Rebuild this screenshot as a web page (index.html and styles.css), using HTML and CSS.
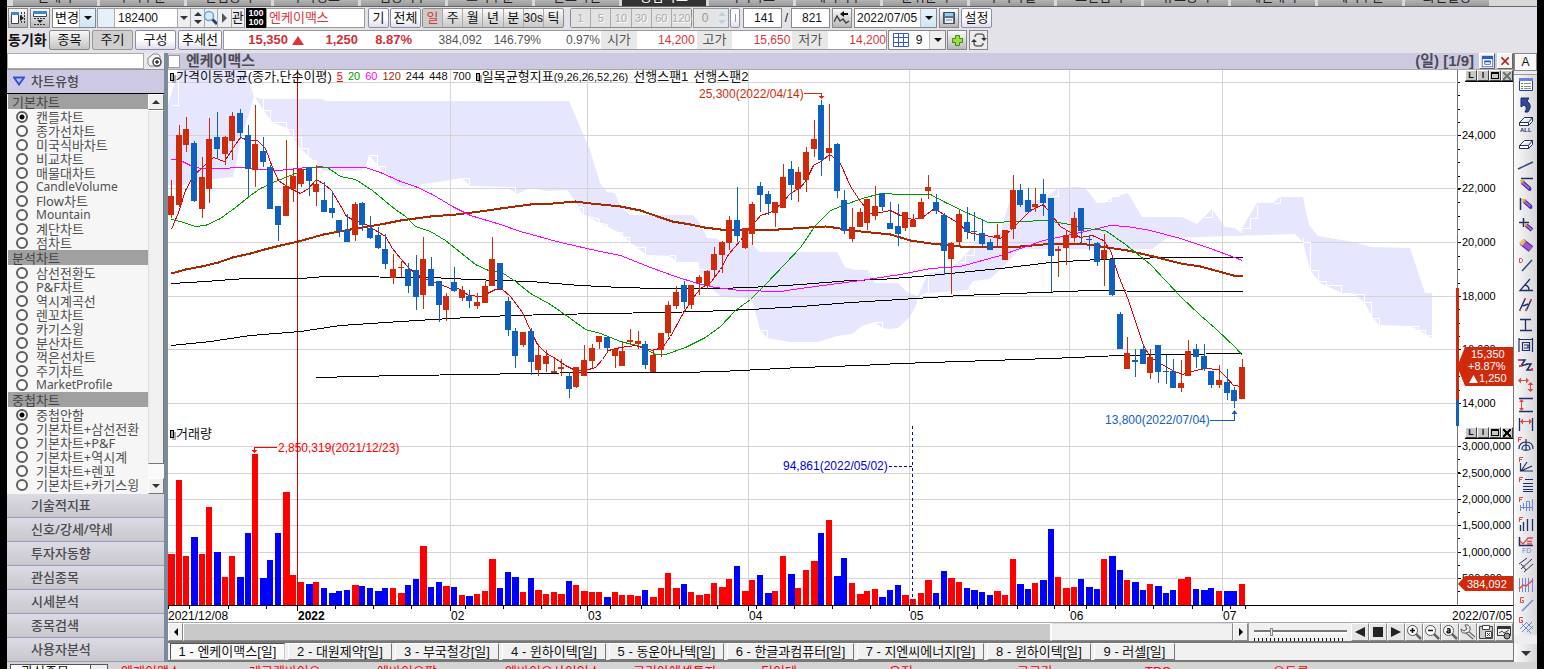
FILE: index.html
```html
<!DOCTYPE html>
<html lang="ko">
<head>
<meta charset="utf-8">
<title>엔케이맥스 차트</title>
<link rel="stylesheet" href="styles.css">
</head>
<body>
<div class="shell">
  <nav class="screens">
    <a href="#">현재가</a><a href="#">주식주문</a><a href="#">관심종목</a><a href="#">투자정보</a><a href="#">업종지수</a><a href="#">호가주문</a><a href="#">잔고확인</a><a href="#" class="on">종합차트</a><a href="#">미니차트</a><a href="#">해외지수</a><a href="#">순위분석</a><a href="#">투자자별</a><a href="#">조건검색</a><a href="#">뉴스공시</a><a href="#">체결내역</a><a href="#">예약주문</a><a href="#">화면설정</a>
  </nav>

  <header class="bars">
    <div class="bar">
      <button class="ico" aria-label="왼쪽 창"><svg viewBox="0 0 16 16"><path d="M1.500 2.500h7v11h-7z" fill="#fff" stroke="#345"/><path d="M1 2h8v3H1z" fill="#3a8ac8"/><path d="M11.500 2v12M14.500 2v12" stroke="#333" stroke-dasharray="2 1"/><path d="M10 5l4 3-4 3z" fill="#222"/></svg></button>
      <button class="ico" aria-label="위쪽 창"><svg viewBox="0 0 16 16"><path d="M1.500 1.500h13v5h-13z" fill="#fff" stroke="#345"/><path d="M1 1h14v3H1z" fill="#3a8ac8"/><path d="M2 8.500h12M2 14.500h12" stroke="#333" stroke-dasharray="2 1"/><path d="M5 10h6l-3 3z" fill="#222"/></svg></button>
      <button class="drop w-change"><span>변경</span><i class="dn blue"></i></button>
      <div class="code">
        <span class="flag"></span><input class="code-in" aria-label="종목코드" value="182400"><button class="cell" aria-label="목록"><i class="tri-d"></i></button><span class="cell spin"><i class="tri-u"></i><i class="tri-d"></i></span><button class="cell" aria-label="검색"><svg viewBox="0 0 16 16"><path d="M9 9l5 5" stroke="#246" stroke-width="3"/><circle cx="6" cy="6" r="4.500" fill="#d4ecfa" stroke="#6ea6c8" stroke-width="1.500"/></svg></button><button class="cell" aria-label="다음"><i class="tri-r"></i></button><button class="cell">관</button>
      </div>
      <span class="margin"><b>100</b><b>100</b></span>
      <input class="name-in" aria-label="종목명" value="엔케이맥스">
      <button class="btn w-s">기</button><button class="btn w-m">전체</button>
      <div class="seg"><button class="down red">일</button><button>주</button><button>월</button><button>년</button><button>분</button><button class="num-b">30s</button><button>틱</button></div>
      <div class="seg off"><button class="down">1</button><button>5</button><button>10</button><button>30</button><button>60</button><button>120</button></div>
      <span class="zero"><em>0</em><span class="spin pale"><i class="tri-u"></i><i class="tri-d"></i></span></span>
      <button class="grip" aria-label="간격"><i></i></button>
      <input class="num" aria-label="표시 개수" value="141"><span class="slash">/</span><input class="num" aria-label="전체 개수" value="821">
      <button class="ico" aria-label="되돌리기"><svg viewBox="0 0 16 16"><path d="M0 12l3-6 3 5 3-2 3 4 3-2" fill="none" stroke="#444" stroke-width="1.500"/><path d="M8 4h6" stroke="#111" stroke-width="2"/><path d="M6 4l4-3v6z" fill="#111"/></svg></button>
      <button class="drop w-date"><span>2022/07/05</span><i class="dn blue"></i></button>
      <button class="ico" aria-label="저장"><svg viewBox="0 0 16 16"><path d="M2.500 2.500h11v11h-11z" fill="#58768a" stroke="#385060"/><path d="M4 3h8v3H4z" fill="#8fd0ee"/><path d="M4 8h8v5H4z" fill="#eee"/><path d="M5 10h6" stroke="#888"/></svg></button>
      <button class="btn w-m">설정</button>
    </div>
    <div class="bar">
      <strong class="sync">동기화</strong>
      <button class="btn grey w-l">종목</button><button class="btn down w-l">주기</button><button class="btn w-l">구성</button><button class="btn w-xl">추세선</button>
      <div class="quote">
        <b class="q1">15,350</b><i class="up"></i><b class="q2">1,250</b><b class="q3">8.87%</b><span class="q4">384,092</span><span class="q3">146.79%</span><span class="q3">0.97%</span><label>시가</label><span class="q5">14,200</span><label>고가</label><span class="q5">15,650</span><label>저가</label><span class="q5">14,200</span>
      </div>
      <button class="drop w-grid"><svg viewBox="0 0 16 16"><path d="M.5 1.500h15v13h-15zM5.500 1v14M10.500 1v14M1 5.500h14M1 10.500h14" fill="#fff" stroke="#3558c8"/></svg><span>9</span><i class="dn"></i></button>
      <button class="ico" aria-label="추가"><svg viewBox="0 0 16 16"><path d="M6.500 3.500h4v3h3v4h-3v3h-4v-3h-3v-4h3z" fill="#9adf3c" stroke="#3d8a1e"/></svg></button>
      <button class="ico flat" aria-label="새로고침"><svg viewBox="0 0 16 16"><path d="M4 5q0-3 3-3h3q3 0 3 3v1M12 11q0 3-3 3H6q-3 0-3-3v-1" fill="none" stroke="#666" stroke-width="1.500"/><path d="M10 6h6l-3 3zM0 10h6L3 7z" fill="#333"/></svg></button>
    </div>
  </header>

  <div class="work">
    <aside class="side">
      <div class="find"><input aria-label="차트 검색"><button aria-label="찾기"><svg viewBox="0 0 16 16"><path d="M1 5l3-2 2-2h5l2 2v10H3L1 11z" fill="#f4f4f4" stroke="#888"/><circle cx="10" cy="9" r="4" fill="#fff" stroke="#444" stroke-width="1.500"/><path d="M8 9h4M10 7v4" stroke="#333" stroke-width="1.500"/></svg></button></div>
      <h2 class="fold open"><svg viewBox="0 0 12 10"><path d="M1 1.500h10L6 8.500z" fill="#b4c8ff" stroke="#3454d8" stroke-width="2"/></svg>차트유형</h2>
      <div class="list">
        <form class="kinds">
          <h3>기본차트</h3>
          <label><input type="radio" name="t" checked>캔들차트</label>
          <label><input type="radio" name="t">종가선차트</label>
          <label><input type="radio" name="t">미국식바차트</label>
          <label><input type="radio" name="t">비교차트</label>
          <label><input type="radio" name="t">매물대차트</label>
          <label class="en"><input type="radio" name="t">CandleVolume</label>
          <label><input type="radio" name="t">Flow차트</label>
          <label class="en"><input type="radio" name="t">Mountain</label>
          <label><input type="radio" name="t">계단차트</label>
          <label><input type="radio" name="t">점차트</label>
          <h3>분석차트</h3>
          <label><input type="radio" name="t">삼선전환도</label>
          <label><input type="radio" name="t">P&amp;F차트</label>
          <label><input type="radio" name="t">역시계곡선</label>
          <label><input type="radio" name="t">렌꼬차트</label>
          <label><input type="radio" name="t">카기스윙</label>
          <label><input type="radio" name="t">분산차트</label>
          <label><input type="radio" name="t">꺽은선차트</label>
          <label><input type="radio" name="t">주기차트</label>
          <label class="en"><input type="radio" name="t">MarketProfile</label>
          <h3>중첩차트</h3>
          <label><input type="radio" name="o" checked>중첩안함</label>
          <label><input type="radio" name="o">기본차트+삼선전환</label>
          <label><input type="radio" name="o">기본차트+P&amp;F</label>
          <label><input type="radio" name="o">기본차트+역시계</label>
          <label><input type="radio" name="o">기본차트+렌꼬</label>
          <label><input type="radio" name="o">기본차트+카기스윙</label>
        </form>
        <div class="vscroll"><button aria-label="위로"><i class="tri-u"></i></button><span class="thumb"></span><span class="rail"></span><button aria-label="아래로"><i class="tri-d"></i></button></div>
      </div>
      <button class="fold">기술적지표</button>
      <button class="fold">신호/강세/약세</button>
      <button class="fold">투자자동향</button>
      <button class="fold">관심종목</button>
      <button class="fold">시세분석</button>
      <button class="fold">종목검색</button>
      <button class="fold">사용자분석</button>
    </aside>

    <main class="pane">
      <div class="title"><input type="checkbox" aria-label="선택"><h1>엔케이맥스</h1><span class="count">(일) [1/9]</span>
        <button aria-label="최대화"><svg viewBox="0 0 16 16"><path d="M1 1h14v14H1z" fill="#2c5cc4"/><path d="M2 5h12v9H2z" fill="#fff"/><path d="M4.500 7.500h7v4h-7z" fill="#fff" stroke="#2c5cc4"/><path d="M4 7h8v2H4z" fill="#2c5cc4"/></svg></button>
        <button aria-label="닫기"><svg viewBox="0 0 16 16"><path d="M3 3l9 9M12 3l-9 9" stroke="#a82020" stroke-width="2"/></svg></button></div>
      <div class="chart">
        <svg class="plot" id="plot"></svg>
        <svg class="axis" id="axis" viewBox="1456 70 57 553"></svg>
        <div class="legend"><i class="pin"></i><span>가격이동평균(종가,단순이평)</span><span class="n r">5</span><span class="n g">20</span><span class="n m">60</span><span class="n b">120</span><span class="n">244</span><span class="n">448</span><span class="n">700</span><i class="pin"></i><span>일목균형지표<span class="n">(9,26,26,52,26)</span></span><span>선행스팬1</span><span>선행스팬2</span></div>
        <div class="legend vol"><i class="pin"></i><span>거래량</span></div>
        <div class="mini"><button>L</button><button>I</button><button><i class="box"></i></button><button class="dim" aria-label="닫기"><i class="ex"></i></button></div>
        <div class="mini vol"><button>L</button><button>I</button><button><i class="box"></i></button><button aria-label="닫기"><i class="ex"></i></button></div>
      </div>
      <div class="navrow">
        <button class="nb" aria-label="왼쪽"><i class="tri-l"></i></button><span class="hthumb"></span><span class="hrest"></span><button class="nb" aria-label="오른쪽"><i class="tri-rs"></i></button>
        <span class="zoom"><input type="range" aria-label="확대" value="18"><span class="marks"></span></span>
        <button class="pb" aria-label="뒤로"><svg viewBox="0 0 16 16"><path d="M13 3v10L3 8z" fill="#222"/></svg></button>
        <button class="pb" aria-label="정지"><svg viewBox="0 0 16 16"><path d="M3 3h10v10H3z" fill="#222"/></svg></button>
        <button class="pb" aria-label="앞으로"><svg viewBox="0 0 16 16"><path d="M3 3v10l10-5z" fill="#222"/></svg></button>
        <button class="pb" aria-label="확대"><svg viewBox="0 0 16 16"><path d="M10 10l5 5" stroke="#666" stroke-width="2.500"/><circle cx="6.500" cy="6.500" r="5" fill="#fff" stroke="#555"/><path d="M4 6.500h5M6.500 4v5" stroke="#111" stroke-width="1.500"/></svg></button>
        <button class="pb" aria-label="축소"><svg viewBox="0 0 16 16"><path d="M10 10l5 5" stroke="#666" stroke-width="2.500"/><circle cx="6.500" cy="6.500" r="5" fill="#fff" stroke="#555"/><path d="M4 6.500h5" stroke="#111" stroke-width="1.500"/></svg></button>
        <button class="pb" aria-label="전체"><svg viewBox="0 0 16 16"><path d="M10 10l5 5" stroke="#666" stroke-width="2.500"/><circle cx="6.500" cy="6.500" r="5" fill="#fff" stroke="#555"/><path d="M5 5q3-1 3 1v3M8 7q-3-.5-3 1t3 .5" fill="none" stroke="#111" stroke-width="1.500"/></svg></button>
        <button class="pb" aria-label="도구"><svg viewBox="0 0 16 16"><path d="M7 8l7 6" stroke="#555" stroke-width="4"/><path d="M7 8l7 6" stroke="#ddd" stroke-width="2"/><path d="M5 1q4-1 5 3t-4 5-5-4l3 2 3-2z" fill="#eee" stroke="#555"/></svg></button>
        <button class="pb" aria-label="복사"><svg viewBox="0 0 16 16"><path d="M1.500 2.500h13v12h-13z" fill="#ccc" stroke="#444"/><path d="M4.500 1.500h7v4h-7z" fill="#fff" stroke="#444"/><path d="M7.500 7.500h6v6h-6z" fill="#fff" stroke="#444"/><path d="M9 9l3 3M12 9l-3 3" stroke="#333"/></svg></button>
        <button class="pb" aria-label="설정"><svg viewBox="0 0 16 16"><path d="M1.500 2.500h13v9h-13z" fill="#eee" stroke="#333"/><path d="M1 4h14" stroke="#333" stroke-width="2"/><path d="M3 9l3-2 2 2 5-3" fill="none" stroke="#444"/><circle cx="11" cy="12" r="3" fill="#999" stroke="#222"/></svg></button>
      </div>
      <nav class="tabs"><button class="t5 on">1 - 엔케이맥스[일]</button><button class="t4">2 - 대원제약[일]</button><button class="t4">3 - 부국철강[일]</button><button class="t4">4 - 윈하이텍[일]</button><button class="t5">5 - 동운아나텍[일]</button><button class="t6">6 - 한글과컴퓨터[일]</button><button class="t6">7 - 지엔씨에너지[일]</button><button class="t4">8 - 윈하이텍[일]</button><button class="t2">9 - 러셀[일]</button></nav>
    </main>

    <aside class="tools">
      <button class="a">A</button>
      <div class="strip">
        <button aria-label="목록"><svg viewBox="0 0 16 16"><path d="M1.500 1.500h13v12h-13z" fill="#fff" stroke="#2c3c98"/><path d="M1 1h14v3H1z" fill="#6e80e0"/><path d="M3 6.500h2M3 9.500h2M3 11.500h2" stroke="#2a9a3a"/><path d="M6 6.500h7M6 9.500h7M6 11.500h7" stroke="#8890a8"/></svg></button>
        <button aria-label="되돌리기"><svg viewBox="0 0 16 16"><path d="M3 1h8L9 4q6 4 1 11H7q3-5-1-7L3 10z" fill="#30489c" stroke="#1a2b6a"/></svg></button>
        <button aria-label="모두 지우기"><svg viewBox="0 0 16 16"><path d="M1.500 5.500l5-5h8l-4 5zM1.500 5.500v3h9l4-4v-4M10.500 5.500v3" fill="#fff" stroke="#1c2f6b"/><text x="2" y="15" font-size="6" font-weight="bold" fill="#1c2f6b">ALL</text></svg></button>
        <button aria-label="지우기"><svg viewBox="0 0 16 16"><path d="M1.500 8.500l5-5h8l-4 5zM1.500 8.500v3h9l4-4v-4M10.500 8.500v3" fill="#fff" stroke="#1c2f6b"/></svg></button>
        <button aria-label="추세선"><svg viewBox="0 0 16 16"><path d="M0 12l15-7" stroke="#30487c" stroke-width="1.500"/></svg></button>
        <button aria-label="수평선"><svg viewBox="0 0 16 16"><path d="M3 1.500h12" stroke="#1c2f6b" stroke-width="1.500"/><path d="M4 5l8 7" stroke="#502080" stroke-width="4"/><path d="M4 5l8 7" stroke="#a868e0" stroke-width="2"/><path d="M2 3l5 0-4 4z" fill="#e8b040"/><path d="M11 12l2 1" stroke="#3030e0" stroke-width="3"/></svg></button>
        <button aria-label="수직선"><svg viewBox="0 0 16 16"><path d="M2.500 1v12" stroke="#1c2f6b" stroke-width="1.500"/><path d="M6 4l7 6" stroke="#502080" stroke-width="4"/><path d="M6 4l7 6" stroke="#a868e0" stroke-width="2"/><path d="M4 2l5 0-4 4z" fill="#e8b040"/><path d="M12 10l2 1" stroke="#3030e0" stroke-width="3"/></svg></button>
        <button aria-label="십자선"><svg viewBox="0 0 16 16"><path d="M5.500 1v9M1 5.500h10" stroke="#1c2f6b" stroke-width="1.500"/><path d="M8 8l6 5" stroke="#502080" stroke-width="4"/><path d="M8 8l6 5" stroke="#a868e0" stroke-width="2"/><path d="M6 6l4 0-3 4z" fill="#e8b040"/></svg></button>
        <button aria-label="연필"><svg viewBox="0 0 16 16"><path d="M4 5l9 7" stroke="#502080" stroke-width="7"/><path d="M4 5l9 7" stroke="#9a58d8" stroke-width="5"/><path d="M1 6l4-4 3 2-4 5z" fill="#e8c060"/></svg></button>
        <button aria-label="D"><svg viewBox="0 0 16 16"><path d="M1.500 1.500h2l1 1v2l-1 1h-2z" fill="none" stroke="#e04848"/><path d="M4 14L14 3" stroke="#30487c" stroke-width="1.500"/></svg></button>
        <button aria-label="각도"><svg viewBox="0 0 16 16"><path d="M12 2L2 13.500h13M7 8q4 1 4 5" fill="none" stroke="#1c2f6b" stroke-width="1.300"/></svg></button>
        <button aria-label="평행"><svg viewBox="0 0 16 16"><path d="M2 13L7 2M8 14l5-11M5 9l5-2" stroke="#1c2f6b" stroke-width="1.500"/><path d="M1 12h2v2H1zM6 1h2v2H6zM7 12h2v2H7zM12 2h2v2h-2z" fill="#e04848"/></svg></button>
        <button aria-label="기간"><svg viewBox="0 0 16 16"><path d="M2 2.500h11M2 13.500h12M7.500 2v12" stroke="#1c2f6b" stroke-width="1.300"/></svg></button>
        <button aria-label="사각"><svg viewBox="0 0 16 16"><path d="M1 1v14M14.500 1v14M1 2.500h13M4.500 5.500h7v8h-7zM6 8h4v3H6" fill="none" stroke="#1c2f6b" stroke-width="1.200"/></svg></button>
        <button aria-label="파동"><svg viewBox="0 0 16 16"><path d="M2 3h5l-4 6 7-2M8 7h5l-4 6h6" fill="none" stroke="#1c2f6b" stroke-width="1.500"/><path d="M0 2h3v2H0zM1 8h3v2H1zM13 11h2v3h-2z" fill="#e04848"/></svg></button>
        <button aria-label="이동"><svg viewBox="0 0 16 16"><path d="M2 3.500h8M12.500 7v6" stroke="#e04848"/><path d="M0 3.500l3-3v6zM11 3.500l-3-3v6zM12.500 5l-3 3h6zM12.500 15l-3-3h6z" fill="#e04848"/></svg></button>
        <button aria-label="상하"><svg viewBox="0 0 16 16"><path d="M1 1.500h14M1 14.500h14" stroke="#1c2f6b" stroke-width="1.300"/><path d="M3.500 4v8" stroke="#e04848"/><path d="M3.500 2L1 5h5zM3.500 14L1 11h5z" fill="#e04848"/></svg></button>
        <button aria-label="좌우"><svg viewBox="0 0 16 16"><path d="M1.500 1v13M14.500 1v13" stroke="#1c2f6b" stroke-width="1.300"/><path d="M3 4.500h9" stroke="#e04848"/><path d="M2 4.500l3-3v6zM14 4.500l-3-3v6z" fill="#e04848"/></svg></button>
        <button aria-label="피보나치 원"><svg viewBox="0 0 16 16"><path d="M1 12q0-7 7-7t7 7M4 13q0-5 4-5t4 5M8 2v12M5 13h6" fill="none" stroke="#1c2f6b" stroke-width="1.200"/><path d="M.5 5V.5H4M.5 2.500H3" fill="none" stroke="#e04848"/></svg></button>
        <button aria-label="피보나치 팬"><svg viewBox="0 0 16 16"><path d="M2.500 6v8H15M3 14l6-9M3 14l11-5" fill="none" stroke="#1c2f6b" stroke-width="1.200"/><path d="M1.500 5V.5H5M1.500 2.500H4" fill="none" stroke="#e04848"/></svg></button>
        <button aria-label="피보나치 되돌림"><svg viewBox="0 0 16 16"><path d="M7 2.500h8M5 6.500h10M5 9.500h10M5 12.500h10M5 14.500h10" stroke="#1c2f6b"/><path d="M1.500 5V.5H5M1.500 2.500H4" fill="none" stroke="#e04848"/></svg></button>
        <button aria-label="피보나치 목표"><svg viewBox="0 0 16 16"><path d="M2.500 8v6M5.500 12V6M8.500 14V4.500h3V14M14.500 2v12M2 10.500h12" fill="none" stroke="#6f86e0"/><path d="M1.500 5V.5H5M1.500 2.500H4" fill="none" stroke="#e04848"/></svg></button>
        <button aria-label="피보나치 시간"><svg viewBox="0 0 16 16"><path d="M2.500 8v6M5.500 5v9M9.500 2v12M14.500 2v12" stroke="#1c2f6b" stroke-width="1.300"/><path d="M1.500 5V.5H5M1.500 2.500H4" fill="none" stroke="#e04848"/></svg></button>
        <button aria-label="FD"><svg viewBox="0 0 16 16"><path d="M1.500 0v8.500H15" fill="none" stroke="#1c2f6b" stroke-width="1.500"/><path d="M2 4l3 3 5-6h5M9 4.500h5M9 7h5" fill="none" stroke="#e04848" stroke-width="1.300"/><text x="4" y="16" font-size="7" fill="#6f86e0">FD</text></svg></button>
        <button aria-label="채널"><svg viewBox="0 0 16 16"><path d="M1 7l8-6M3 12L14 2M6 15l9-8M3 7l5 6" stroke="#1c2f6b"/><path d="M5 8h2v2H5z" fill="#e04848"/></svg></button>
        <button aria-label="회귀"><svg viewBox="0 0 16 16"><path d="M1.500 1v14M4.500 1v14M7.500 1v14M10.500 1v14M14.500 1v14" stroke="#6f86e0"/><path d="M1 12l4-4 3 1 7-6" fill="none" stroke="#e04848" stroke-width="1.500"/></svg></button>
        <button aria-label="갠 선"><svg viewBox="0 0 16 16"><path d="M4 14L15 3" stroke="#6f86e0" stroke-width="1.500"/><path d="M6 .5H2.500v5H5.500v-2H4" fill="none" stroke="#e04848"/></svg></button>
        <button aria-label="갠 격자"><svg viewBox="0 0 16 16"><path d="M2 12l6-6M4 15L14 5M9 15l6-6M4 7l9 9M8 5l7 7" stroke="#6f86e0"/><path d="M5 .5H1.500v5H4.500v-2H3" fill="none" stroke="#e04848"/></svg></button>
      </div>
      <button class="more" aria-label="더보기"><i class="tri-d big"></i></button>
    </aside>
  </div>
  <footer class="ticker"><span class="pick">관심종목<i></i></span><span class="t">엔케이맥스</span><span class="t">레고켐바이오</span><span class="t">에바이오팜</span><span class="t">엔바이오사이언스</span><span class="t">코리아에셋투자</span><span class="t">티이테</span><span class="t">유진</span><span class="t">코코라</span><span class="t">TPC</span><span class="t">오트론</span></footer>
</div>
<script src="chart.js"></script>
</body>
</html>
```
FILE: styles.css
```css
* { box-sizing: border-box; margin: 0; padding: 0; }
body { font: 12px/14px "Liberation Sans", "Noto Sans CJK KR", sans-serif; color: #111; background: #000; overflow: hidden; }
button, input { font: inherit; color: inherit; border-radius: 0; }
button { display: flex; align-items: center; justify-content: center; border: 0; background: none; white-space: nowrap; }
i { display: block; font-style: normal; flex: none; }
svg { display: block; }
.shell { display: flex; flex-direction: column; height: 100vh; border-left: 7px solid #000; border-right: 7px solid #000; background: #e3e2e9; }

.screens { display: flex; gap: 3px; flex: none; height: 7px; padding-left: 6px; overflow: hidden; background: #d8d8d8; border-bottom: 1px solid #666; }
.screens a { width: 84px; height: 6px; display: flex; align-items: flex-end; justify-content: center; overflow: hidden; background: linear-gradient(#b4b4b4, #989898); color: #222; text-decoration: none; font-size: 13px; line-height: 12px; padding-bottom: 3px; }
.screens a.on { background: #333; color: #fff; }

.bars { flex: none; display: flex; flex-direction: column; gap: 2px; padding: 1px 0 3px 1px; height: 46px; }
.bar { display: flex; align-items: stretch; gap: 1px; height: 20px; }
.bar > * { flex: none; }
.ico { width: 20px; border: 1px solid #888; background: linear-gradient(#fafafa, #b8b8b8); margin-right: 1px; }
.ico.flat { background: #ececec; width: 19px; }
.ico svg, .cell svg { width: 16px; height: 16px; flex: none; }
.drop { border: 1px solid #888; background: #fff; font-size: 13px; justify-content: space-between; padding-left: 2px; }
.w-change { width: 44px; }
.w-date { width: 83px; font-size: 12px; margin-right: 1px; }
.w-grid { width: 58px; padding-left: 4px; font-size: 12px; }
.w-grid svg { width: 16px; height: 16px; flex: none; }
.dn { width: 16px; height: 18px; background: #eee; border-left: 1px solid #bbb; display: flex; align-items: center; justify-content: center; }
.dn.blue { background: linear-gradient(#e8f4fc, #cfe6f6); }
.dn::after { content: ""; border: 4px solid transparent; border-top: 4px solid #111; border-bottom: 0; }
.tri-d, .tri-u { width: 0; height: 0; border: 4px solid transparent; }
.tri-d { border-top: 4px solid #333; border-bottom: 0; }
.tri-u { border-bottom: 4px solid #333; border-top: 0; }
.tri-d.big { border-width: 5px 5px 0; }
.tri-l, .tri-rs { width: 0; height: 0; border: 4px solid transparent; border-right: 4px solid #000; border-left: 0; }
.tri-rs { border-left: 4px solid #000; border-right: 0; }
.tri-r { width: 0; height: 0; border: 5px solid transparent; border-left: 5px solid #555; border-right: 0; }
.code { display: flex; width: 148px; border: 1px solid #999; background: #fff; }
.flag { flex: none; width: 17px; background: #e4f1fb; border-right: 1px solid #aaa; }
.code-in { flex: none; width: 62px; border: 0; padding-left: 3px; }
.cell { flex: 1; min-width: 0; width: 12px; border-left: 1px solid #aaa; background: #eceef2; font-size: 13px; }
.spin { display: flex; flex-direction: column; align-items: center; justify-content: center; gap: 4px; }
.margin { width: 20px; background: #000; color: #fff; display: flex; flex-direction: column; align-items: center; justify-content: center; }
.margin b { font: bold 9px/9px "Liberation Sans", sans-serif; }
.name-in { width: 99px; margin-left: -1px; padding-left: 2px; border: 1px solid #999; background: #fff; color: #d8363c; font-size: 13px; margin-right: 2px; }
.btn { border: 1px solid #8e8caa; border-radius: 2px; background: linear-gradient(#fff 50%, #dedeec); font-size: 13px; }
.btn.grey { background: linear-gradient(#f8f8f8, #c4c4c4); border-color: #888; }
.btn.down { background: #cfcfcf; border-color: #999; }
.w-s { width: 21px; } .w-m { width: 31px; } .w-l { width: 41px; margin-right: 1px; } .w-xl { width: 44px; }
.seg { display: flex; width: 142px; border: 1px solid #8a8a8a; border-radius: 2px; background: linear-gradient(#fbfbfb, #c8c8c8); margin-right: 5px; }
.seg button { flex: 1; width: 20px; border-left: 1px solid #aaa; font-size: 13px; }
.seg button:first-child { border-left: 0; }
.seg .num-b { font-size: 12px; }
.seg .down { background: #ccc; }
.seg .red { color: #d8363c; }
.seg.off { width: 122px; color: #aaa; margin-right: 0; }
.seg.off button { font-size: 11px; background: #e2e2e2; text-shadow: 1px 1px #fff; }
.zero { width: 36px; display: flex; border: 1px solid #999; background: #e4e4e4; color: #999; }
.zero em { flex: 1; font-style: normal; text-align: center; line-height: 18px; }
.zero .spin { width: 12px; background: #dfe8f0; }
.pale i { filter: invert(1); }
.grip { width: 10px; border: 1px solid #8e8caa; border-radius: 2px; background: linear-gradient(#fff 50%, #dedeec); margin-right: 2px; }
.grip i { width: 1px; height: 8px; background: #99a; }
.num { width: 39px; border: 1px solid #888; background: #fff; text-align: right; padding-right: 7px; }
.slash { width: 7px; text-align: center; line-height: 20px; }
.num + .ico { margin-left: 1px; }

.sync { width: 40px; font-size: 14px; line-height: 20px; }
.quote { width: 664px; display: flex; align-items: center; border: 1px solid #999; background: #fff; color: #555; font-size: 12px; }
.quote span, .quote b { text-align: right; flex: none; }
.quote b { color: #d03038; font-size: 13px; }
.quote label { width: 36px; height: 18px; line-height: 18px; text-align: center; background: #e8e8e8; font-size: 13px; margin: 0 1px; }
.q1 { width: 64px; } .up { border: 6px solid transparent; border-top: 0; border-bottom: 9px solid #d8363c; margin-left: 4px; } .q2 { width: 54px; }
.quote b.q3 { width: 54px; } .q3 { width: 59px; } .q4 { width: 70px; }
.quote .q5 { width: 57px; color: #d8363c; }
.quote .q5 + label { margin-left: 2px; }

.work { flex: 1; min-height: 0; display: flex; }
.side { flex: none; width: 161px; border-right: 4px solid #7a8c9c; background: #e8e8ee; display: flex; flex-direction: column; font-family: "Noto Sans", "Noto Sans CJK KR", sans-serif; color: #4a4a50; }
.find { display: flex; height: 16px; gap: 3px; flex: none; }
.find input { width: 137px; border: 1px solid #aaa; background: #fff; }
.find svg { width: 16px; height: 16px; }
.fold { flex: none; width: 100%; height: 24px; padding: 0 0 2px 24px; display: flex; align-items: center; justify-content: flex-start; font-size: 13px; font-weight: 500; line-height: 20px; background: linear-gradient(#dcdbe5, #c8c8cc); border-bottom: 1px solid #9c98c0; }
.fold.open { height: 25px; background: #cec9e3; border: solid #999; border-width: 1px 0 0; border-bottom: 1px solid #000; padding-left: 6px; gap: 6px; }
.fold svg { width: 12px; height: 10px; }
.list { flex: none; height: 400px; display: flex; background: #f6f6f6; }
.kinds { width: 141px; padding-left: 1px; display: flex; flex-direction: column; }
.kinds h3 { height: 15px; font: 13px/15px "Noto Sans CJK KR", sans-serif; padding-left: 4px; background: #a0a0a0; color: #444; margin-bottom: 1px; }
.kinds label { display: flex; align-items: center; gap: 8px; padding-left: 8px; height: 14px; font-size: 13px; line-height: 14px; white-space: nowrap; color: #505050; }
.kinds .en { font-size: 12px; }
.kinds input { appearance: none; flex: none; width: 12px; height: 12px; border: 2px solid #5c5c5c; border-radius: 50%; background: #fff; }
.kinds input:checked { background: radial-gradient(circle, #000 2px, #fff 3px); }
.vscroll { width: 16px; display: flex; flex-direction: column; }
.vscroll button { flex: none; height: 16px; border: 1px solid; border-color: #fff #777 #777 #fff; background: #f0f0f0; }
.thumb { flex: 1; background: #f0f0f0; border: 1px solid; border-color: #fff #777 #777 #ddd; }
.rail { height: 14px; background: #fafafa; }

.pane { flex: 1; min-width: 0; display: flex; flex-direction: column; background: #f0f0f0; }
.title { flex: none; display: flex; align-items: center; height: 17px; background: #cec9e3; border-bottom: 1px solid #aaa; gap: 2px; color: #4c4c54; }
.title input { appearance: none; width: 12px; height: 13px; background: #fff; border: 1px solid #999; }
.title h1 { flex: 1; font-size: 15px; line-height: 16px; padding-left: 4px; }
.count { font-size: 15px; font-weight: bold; padding-right: 3px; }
.title button { width: 16px; height: 16px; background: #f4f4f4; border: 1px solid; border-color: #fff #666 #666 #fff; }
.title svg { width: 13px; height: 13px; }
.chart { position: relative; flex: none; display: flex; height: 553px; background: #fff; border-bottom: 1px solid #aaa; }
.plot { flex: 1; min-width: 0; height: 552px; overflow: hidden; }
.axis { flex: none; width: 57px; height: 553px; overflow: visible; }
.chart text { font: 12px "Liberation Sans", sans-serif; }
.chart .ax { font-size: 11px; }
.chart .yr { font-weight: bold; }
.legend { position: absolute; left: 2px; top: 0; display: flex; align-items: center; gap: 5px; height: 13px; font-size: 13px; line-height: 13px; white-space: nowrap; }
.legend.vol, .mini.vol { top: 357px; }
.n { font-size: 11px; }
.pin { width: 4px; height: 8px; border: 1px solid #000; background: #aaa; margin-right: -3px; box-shadow: 2px 2px #aaa; }
.r { color: #f00; text-decoration: underline; } .g { color: #090; } .m { color: #f0f; } .b { color: #a52a00; }
.mini { position: absolute; right: 0; top: 0; display: flex; width: 48px; border-bottom: 1px solid #000; }
.mini button { flex: 1; height: 11px; background: #c8c8c8; border: 1px solid; border-color: #fff #444 #444 #fff; font: bold 9px/9px "Liberation Sans", sans-serif; }
.box { width: 8px; height: 7px; border: 1px solid #000; border-top-width: 2px; }
.ex { width: 8px; height: 8px; background: linear-gradient(45deg, transparent 43%, #000 43% 57%, transparent 57%), linear-gradient(-45deg, transparent 43%, #000 43% 57%, transparent 57%); }
.dim .ex { opacity: .4; }

.navrow { flex: none; display: flex; height: 20px; border-bottom: 2px solid #777; background: #f0f0f0; }
.nb { flex: none; width: 15px; background: #f0f0f0; border: 1px solid; border-color: #fff #888 #888 #fff; }
.hthumb { flex: 870; background: #c8c8c8; border: 1px solid #fff; border-bottom-color: #888; }
.hrest { flex: 181; background: #f0f0f0; border: 1px solid; border-color: #ddd #888 #888 #fff; }
.zoom { flex: none; width: 103px; padding: 5px 5px 0; display: flex; flex-direction: column; gap: 2px; border-left: 1px solid #999; }
.zoom input { appearance: none; width: 93px; height: 8px; background: linear-gradient(transparent 2px, #777 2px 4px, #fff 4px 6px, transparent 6px); }
.zoom input::-webkit-slider-thumb { appearance: none; width: 3px; height: 8px; background: #e8e8e8; border: 1px solid #888; }
.marks { height: 4px; background: repeating-linear-gradient(90deg, #111 0 1px, transparent 1px 4px); }
.pb { flex: none; width: 18px; background: #e6e6e6; border: 1px solid; border-color: #fff #888 #888 #fff; }
.pb svg { width: 16px; height: 16px; flex: none; }
.tabs { flex: none; display: flex; gap: 3px; height: 19px; padding-left: 2px; border-bottom: 2px solid #777; }
.tabs button { border: 1px solid; border-color: #fff #777 #777 #fff; font-size: 13px; height: 17px; }
.tabs .on { background: #fafafa; border-color: #555 #ccc #ccc #555; }
.t2 { width: 81px; } .t4 { width: 104px; } .t5 { width: 115px; } .t6 { width: 127px; }

.tools { flex: none; width: 24px; display: flex; flex-direction: column; border-left: 1px solid #777; background: #eee; }
.a { flex: none; height: 18px; font-size: 12px; background: #f8f8f8; border: 1px solid #888; margin-bottom: 3px; }
.strip { display: flex; flex-direction: column; background: linear-gradient(90deg, #fafafa, #d6d6da); border-top: 1px solid #999; }
.strip button { height: 20px; }
.strip svg { width: 16px; height: 16px; overflow: visible; }
.more { flex: none; height: 18px; margin-top: 9px; background: linear-gradient(90deg, #fafafa, #d6d6da); }

.ticker { flex: none; height: 7px; overflow: hidden; display: flex; background: #d4d4d4; line-height: 14px; font-size: 13px; }
.pick { flex: none; width: 98px; margin: 2px 8px 0 3px; height: 18px; padding-left: 10px; border: 1px solid #555; background: #fff; display: flex; justify-content: space-between; }
.pick i { width: 17px; border-left: 1px solid #555; background: #eee; }
.t { flex: none; width: 128px; padding: 3px 0 0 5px; color: #f00; }
```
FILE: chart.js
```js
// One row per session: colour, high, body top, body bottom, low
const prices = `R180,196,215,218 R125,135,205,207 R117,129,145,152 B141,143,201,202 R157,177,209,218 R118,139,189,203 B112,137,149,159 R136,137,154,165 R112,116,141,160 B109,113,133,139 B125,135,169,196 R105,144,170,187 B137,151,162,167 B165,167,209,209 B206,206,225,241 R140,186,216,216 R168,176,189,202 R168,169,184,187 B167,167,181,196 R165,184,192,206 B182,200,212,212 B191,208,213,218 B220,220,231,237 B214,230,242,242 R202,204,235,241 B202,203,225,231 B216,228,238,239 B227,235,248,249 B234,249,264,269 R254,269,278,284 R261,267,268,277 B263,269,286,293 B255,270,297,310 R237,259,295,309 B257,269,286,286 B281,281,305,322 R293,296,310,321 B267,282,291,292 R286,290,298,301 B290,296,301,308 R293,302,306,309 R281,286,303,303 R237,259,286,286 B263,263,289,289 B297,301,330,336 B328,331,356,368 R332,332,345,347 B328,331,362,375 R344,355,370,376 R350,356,364,372 R359,371,373,373 R359,367,369,376 B372,376,389,398 R367,367,387,388 R345,360,376,376 R344,348,361,368 R336,336,342,349 B337,337,348,351 R348,349,356,368 R343,351,366,366 R329,340,342,345 R331,341,344,349 B341,344,365,369 R349,355,372,372 R333,333,350,357 R301,305,333,337 R286,292,306,309 B281,285,302,309 R285,285,305,309 R275,277,283,295 R270,271,286,289 R247,254,270,277 R241,242,255,273 R216,220,243,250 B187,220,236,242 R228,228,248,249 R202,204,234,245 B182,186,195,212 B191,194,204,215 R202,202,213,227 R164,177,208,208 B161,169,185,200 R167,172,189,202 R147,152,180,192 R120,139,149,157 B100,105,160,176 R104,148,153,161 B143,144,191,198 B190,200,231,234 R208,227,239,242 R208,212,227,227 R199,199,223,230 R186,206,216,220 B193,193,207,211 B202,223,229,229 B204,226,234,246 R212,212,228,231 R214,220,227,227 R198,202,219,219 R175,187,191,199 B194,202,211,214 B213,215,251,275 R242,243,259,294 R210,214,242,246 B207,222,232,239 B212,231,232,241 B219,233,244,246 B239,242,250,250 R224,235,238,246 R230,230,260,260 R175,190,229,239 B184,190,205,207 B188,200,212,212 R188,204,207,212 B179,194,203,216 B198,198,256,292 R246,249,251,277 R231,235,248,265 R212,218,238,242 B208,208,231,245 B235,239,240,250 B242,243,262,266 R234,250,259,286 B259,259,295,296 B312,314,349,349 R337,353,369,369 B349,360,362,377 B344,349,364,364 R349,357,373,379 B345,345,372,383 B355,371,372,384 B359,371,388,388 R360,383,388,392 R340,351,376,376 B344,349,357,368 B344,356,369,371 B371,371,385,388 R365,380,385,388 B369,382,393,400 B387,390,401,408 R359,367,399,399`.split(' ');
// Volume bars: colour and top
const volumes = `R554 R480 R556 B537 R554 R507 B552 R577 R556 B577 B533 R454 B578 B560 B533 R492 R575 R582 B584 R582 B588 B593 B591 B590 R585 B586 B588 B591 B588 R588 R593 B585 B579 R546 B587 B582 R586 B587 R595 B596 R594 R591 R559 B588 B572 B577 R592 B578 R590 R594 R592 R594 B581 R585 R591 R592 R592 B597 R592 R595 R595 R596 B590 R597 R588 R573 R588 B584 R592 R595 R594 R583 R587 R579 B566 R591 R580 B575 B593 R591 R556 B574 R588 R570 R561 B533 R520 B576 B558 R583 R594 R591 R589 B597 B590 B585 R595 R599 R593 R580 B593 B571 R578 R582 B588 B590 B592 B595 R591 R595 R559 B584 B589 R583 B580 B529 R577 R588 R587 B579 B587 B589 R559 B556 B570 R580 B582 B590 R584 B586 B593 B590 R579 R577 B589 B590 B588 R591 B591 B591 R584`.split(' ');

const clouds = [
  '168,105 178,70 246,70 254,97 248,117 240,143 237,160 233,177 213,179 182,185 168,185',
  '255,97 262,99 322,99 325,101 569,101 590,150 600,183 607,192 615,193 620,205 630,215 693,215 700,223 707,238 715,238 723,242 750,242 760,252 837,252 845,267 855,270 868,270 875,283 898,283 907,292 917,296 917,303 910,317 898,328 890,329 882,328 875,322 862,326 852,334 837,336 818,342 790,342 767,338 760,330 753,303 747,298 722,297 713,290 700,272 697,262 677,262 670,256 647,255 633,245 620,233 600,223 583,215 576,202 567,190 547,191 530,188 517,194 507,187 470,186 462,178 437,182 403,187 393,182 380,168 369,155 365,168 357,171 323,171 315,162 300,148 290,133 287,128 273,123 263,110',
  '917,298 928,273 950,270 967,253 977,240 1000,233 1010,200 1043,200 1058,188 1080,187 1087,190 1097,203 1105,203 1113,197 1128,193 1142,217 1182,217 1197,224 1212,209 1225,227 1235,228 1240,232 1248,218 1257,203 1273,203 1280,197 1303,197 1309,225 1318,236 1353,242 1372,247 1410,248 1425,293 1432,293 1432,338 1418,330 1410,326 1379,325 1372,317 1365,303 1355,295 1342,293 1320,283 1310,270 1303,242 1295,234 1167,238 1152,249 1020,249 1000,270 990,279 973,281 967,290 930,293'
];
const steps = [
  '171,105 178,105 178,78', '263,98 263,110 270,110 270,122 286,122 286,129 293,129 293,137 301,137 301,148 308,148 308,160 316,160 316,170',
  '369,155 377,155 377,166 385,166 385,175 393,175', '462,178 469,178 469,186', '507,187 515,187 515,193', '576,207 583,207 583,215 599,219 599,223 607,224 607,232 622,232 622,237 629,237 629,243 637,247 645,247 645,254',
  '668,255 675,255 675,262 690,262 698,262 698,269 707,269', '760,330 767,330 767,338', '875,322 882,322 882,328',
  '928,275 928,292 920,296', '958,262 965,262 965,255 974,255 974,245 981,245', '1001,232 1001,222 1010,222 1010,210', '1050,196 1058,196 1058,188', '1105,201 1111,201 1111,196 1119,196',
  '1204,217 1212,217 1212,209', '1241,232 1241,228 1250,228 1250,218 1257,218 1257,204', '1273,203 1280,203 1280,197',
  '1303,237 1303,242 1310,242 1310,270 1318,270 1318,281 1326,281 1326,285 1341,285 1341,293 1364,294 1364,302 1371,302 1371,318 1379,318 1379,325', '1410,326 1418,326 1418,330 1425,330 1425,335 1432,335'
];
const averages = [
  ['#000', 1, '171,283 205,281 245,278 300,278 325,276 430,277 470,279 530,281 580,285 620,287 658,288 720,288 770,286 800,284 850,280 880,279 930,275 1000,268 1050,262 1080,260 1120,258 1180,257 1242,257'],
  ['#000', 1, '171,345 210,341 250,335 300,331 340,325 400,321 450,318 510,315 600,313 665,312 700,311 750,309 800,306 850,302 900,299 960,295 1040,292 1090,290 1160,291 1242,291'],
  ['#000', 1, '316,377 400,375 480,374 520,373 600,372 680,372 720,371 800,367 860,365 900,363 960,361 1050,358 1120,355 1170,354 1242,353'],
  ['#a52a00', 2, '171,273 185,269 201,266 218,262 232,257 250,253 264,249 280,245 298,241 323,234 350,229 380,224 400,220 430,216 456,214 480,211 500,208 530,204 553,203 575,201 590,203 620,206 640,210 660,217 672,221 690,224 704,227 720,229 778,229 793,228 825,226 833,227 860,231 890,234 910,240 930,243 960,246 1020,246 1043,244 1080,243 1100,246 1127,250 1153,256 1180,263 1200,266 1233,275 1242,275'],
  ['#f0f', 1, '171,159 180,160 190,165 200,168 220,168 240,167 275,170 290,169 305,167 365,167 380,172 400,181 415,186 432,194 452,206 470,215 500,224 520,231 560,242 600,251 620,255 650,267 675,276 697,283 715,287 740,290 780,291 800,288 830,284 860,280 900,274 930,268 960,266 1000,255 1043,240 1080,232 1110,225 1127,226 1150,230 1180,238 1210,248 1242,260'],
  ['#090', 1, '171,219 180,221 195,226 205,225 220,218 235,207 250,195 260,188 275,181 290,175 305,169 318,166 327,167 340,176 355,179 372,190 385,201 395,209 405,216 415,226 430,231 445,240 460,252 475,264 488,270 500,271 515,281 530,293 550,304 570,318 585,329 600,333 620,341 640,346 655,354 665,354 685,347 705,337 720,326 735,310 750,299 765,284 785,263 800,247 815,225 830,210 845,204 862,198 880,193 903,194 930,194 945,202 970,214 988,222 1020,221 1045,220 1070,224 1085,228 1105,230 1125,244 1150,264 1180,296 1200,315 1215,328 1235,347 1242,355'],
  ['#e00000', 1, '171,229 178,212 185,190 193,175 201,168 213,157 224,161 235,144 240,137 248,140 257,140 265,148 272,167 278,180 288,187 300,193 308,188 316,179 324,184 331,190 340,205 346,216 352,219 362,222 372,228 385,236 392,248 400,258 408,267 416,274 424,278 437,283 450,288 458,288 468,295 480,296 487,293 495,289 502,289 510,296 522,312 530,330 537,344 546,353 555,358 565,365 575,370 585,370 595,367 602,359 608,350 620,347 635,345 645,348 652,350 662,347 670,336 682,314 693,297 700,288 711,281 720,269 728,254 740,240 748,228 756,220 760,215 770,212 780,204 790,193 800,187 805,181 813,165 822,160 829,154 835,158 840,163 850,186 860,201 870,213 880,212 890,210 900,215 912,219 922,217 934,208 945,215 957,222 968,232 978,234 990,236 1000,238 1010,230 1020,220 1030,210 1043,204 1050,213 1060,226 1070,232 1080,237 1092,235 1103,240 1110,250 1118,275 1128,300 1143,345 1150,357 1160,363 1172,370 1182,374 1195,370 1205,368 1218,369 1226,377 1233,385 1242,386']
];

const LEFT = 168, TOP = 70, FIRST = 171, STEP = 7.65;
const line = (x1, y1, x2, y2, c, extra = '') => `<path d="M${x1} ${y1}L${x2} ${y2}" stroke="${c}" fill="none" ${extra}/>`;
const rect = (x, y, w, h, c) => `<rect x="${x}" y="${y}" width="${w}" height="${h}" fill="${c}" shape-rendering="crispEdges"/>`;
const text = (x, y, s, c, cls = '') => `<text x="${x}" y="${y}" fill="${c}" class="${cls}">${s}</text>`;
const group = body => `<g transform="translate(${-LEFT} ${-TOP})">${body}</g>`;
const priceRows = [135, 188, 242, 296, 349, 403];
const volumeRows = [446, 473, 499, 525, 552, 578];
const months = [[450, '02'], [587, '03'], [748, '04'], [909, '05'], [1069, '06'], [1222, '07']];
const weeks = [168, 189, 228, 266, 335, 373, 411, 465, 503, 541, 580, 610, 641, 679, 717, 756, 794, 832, 870, 939, 977, 1017, 1054, 1086, 1115, 1153, 1192, 1230, 1245];

const cloud = clouds.map(p => `<polygon points="${p}" fill="#e6e6ff"/>`).join('');
const grid = [82, ...priceRows, ...volumeRows].map(y => rect(0, y - TOP, '100%', 1, '#d4d4d4')).join('');

let marks = '<g transform="translate(.5 .5)" shape-rendering="crispEdges">' + steps.map(p => `<polyline points="${p}" fill="none" stroke="#fff"/>`).join('') + '</g>';
for (const [x] of months) marks += rect(x, TOP, 1, 535, '#d4d4d4');
marks += rect(297, TOP, 1, 535, '#e00000');
marks += '<g transform="translate(.5 .5)" shape-rendering="crispEdges">' + averages.map(([c, w, p]) => `<polyline points="${p}" fill="none" stroke="${c}" stroke-width="${w}"/>`).join('') + '</g>';
prices.forEach((row, i) => {
  const c = row[0] === 'R' ? '#d02a0c' : '#1060c0';
  const [hi, top, bot, lo] = row.slice(1).split(',').map(Number);
  const x = Math.round(FIRST + STEP * i);
  marks += rect(x, hi, 1, Math.max(1, lo - hi), c) + rect(x - 3, top, 6, Math.max(1, bot - top), c);
});
volumes.forEach((row, i) => {
  const x = Math.round(FIRST + STEP * i), y = Number(row.slice(1));
  marks += rect(x - 3, y, i % 3 ? 6 : 7, 605 - y, row[0] === 'R' ? '#f00' : '#00f');
});
for (const x of weeks) marks += rect(x, 605, 1, 4, '#000');
for (const [x, m] of months) marks += rect(x, 605, 1, 6, '#000') + text(x + 1, 620, m, '#000');
marks += rect(297, 605, 1, 6, '#000') + text(168, 620, '2021/12/08', '#000') + text(298, 620, '2022', '#000', 'yr');
marks += text(699, 98, '25,300(2022/04/14)', '#d02a0c') + line(804, 93.5, 821.5, 93.5, '#d02a0c') + line(821.5, 93, 821.5, 98, '#d02a0c') + '<path d="M818.500 96h6l-3 3z" fill="#d02a0c"/>';
marks += text(1105, 424, '13,800(2022/07/04)', '#1060c0') + line(1210, 420.5, 1234.5, 420.5, '#1060c0') + line(1234.5, 421, 1234.5, 411, '#1060c0') + '<path d="M1231.500 414h6l-3-4z" fill="#1060c0"/>';
marks += text(278, 452, '2,850,319(2021/12/23)', '#f00') + line(254.5, 447.5, 277, 447.5, '#f00') + line(254.5, 447, 254.5, 452, '#f00') + '<path d="M251.500 450h6l-3 3z" fill="#f00"/>';
marks += text(783, 470, '94,861(2022/05/02)', '#00d') + line(889, 466.5, 912, 466.5, '#00d', 'stroke-dasharray="3 2"') + line(912.5, 426, 912.5, 603, '#00d', 'stroke-dasharray="3 3"');
document.getElementById('plot').innerHTML = group(cloud) + grid + group(marks) + rect(0, 605 - TOP, '100%', 1, '#000');

let a = rect(1457, 70, 1, 535, '#777') + rect(1456, 605, 57, 1, '#000');
for (let i = 0; i < 25; i++) a += rect(1458, Math.round(82 + 13.37 * i), 2, 1, '#000');
for (let i = 0; i < 12; i++) a += rect(1458, Math.round(446 + 13.2 * i), 2, 1, '#000');
priceRows.forEach((y, i) => { a += rect(1458, y, 3, 1, '#000') + text(1462, y + 4, `${24 - 2 * i},000`, '#000', 'ax'); });
['3,000,000', '2,500,000', '2,000,000', '1,500,000', '1,000,000', '500,000'].forEach((v, i) => { a += rect(1458, volumeRows[i], 3, 1, '#000') + text(1462, volumeRows[i] + 4, v, '#000', 'ax'); });
a += rect(1456, 288, 3, 112, '#d02a0c') + rect(1456, 400, 3, 26, '#1060c0');
a += '<path d="M1459 362L1465 347H1513V386H1465L1459 371z" fill="#d02a0c"/><path d="M1458 584L1465 576H1513V591H1465z" fill="#d02a0c"/>';
a += text(1471, 358, '15,350', '#fff', 'ax') + text(1468, 370, '+8.87%', '#fff', 'ax') + '<path d="M1469 383h9l-4.500-8z" fill="#fff"/>' + text(1479, 382, '1,250', '#fff', 'ax') + text(1467, 588, '384,092', '#fff', 'ax');
a += text(1452, 620, '2022/07/05', '#000');
document.getElementById('axis').innerHTML = a;
```
